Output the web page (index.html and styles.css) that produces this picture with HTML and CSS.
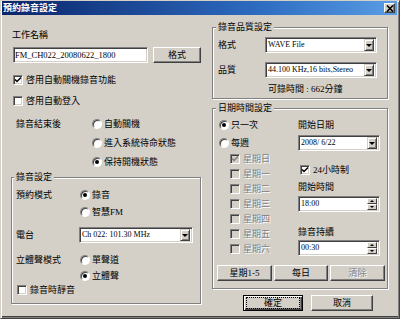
FILE: index.html
```html
<!DOCTYPE html>
<html lang="zh-Hant">
<head>
    <meta charset="UTF-8">
    <title>預約錄音設定</title>
    <link rel="stylesheet" href="styles.css">
</head>
<body>
    <div class="window">
        <div class="titlebar">
            <span class="title">預約錄音設定</span>
            <span class="close-btn">
                <svg width="8" height="7" viewBox="0 0 8 7"><path d="M1 0.5 L7 6.5 M7 0.5 L1 6.5" stroke="#000" stroke-width="1.6"/></svg>
            </span>
        </div>
        <div class="dialog">
            <div class="col-left">
                <div class="name-label">工作名稱</div>
                <div class="name-row">
                    <div class="textbox name-box">FM_CH022_20080622_1800</div>
                    <div class="button format-btn">格式</div>
                </div>
                <div class="check cb-autooff">
                    <span class="box"><svg width="8" height="8" viewBox="0 0 8 8"><path d="M1 3.5 L3 5.5 L7 1.5" fill="none" stroke="#000" stroke-width="1.5"/></svg></span>
                    <span>啓用自動關機錄音功能</span>
                </div>
                <div class="check cb-autologin">
                    <span class="box"></span>
                    <span>啓用自動登入</span>
                </div>
                <div class="end-row">
                    <div class="end-label">錄音結束後</div>
                    <div class="radio-list end-list">
                        <div class="radio"><span class="dot"></span>自動關機</div>
                        <div class="radio"><span class="dot"></span>進入系統待命狀態</div>
                        <div class="radio"><span class="dot on"></span>保持開機狀態</div>
                    </div>
                </div>
                <fieldset class="group rec-group">
                    <legend>錄音設定</legend>
                    <div class="mode-row">
                        <div class="row-label">預約模式</div>
                        <div class="radio-list mode-list">
                            <div class="radio"><span class="dot on"></span>錄音</div>
                            <div class="radio"><span class="dot"></span>智慧FM</div>
                        </div>
                    </div>
                    <div class="station-row">
                        <div class="row-label station-label">電台</div>
                        <div class="textbox combo station-combo"><span class="combo-text">Ch 022: 101.30 MHz</span><span class="drop"></span></div>
                    </div>
                    <div class="stereo-row">
                        <div class="row-label">立體聲模式</div>
                        <div class="radio-list stereo-list">
                            <div class="radio"><span class="dot"></span>單聲道</div>
                            <div class="radio"><span class="dot on"></span>立體聲</div>
                        </div>
                    </div>
                    <div class="check cb-mute">
                        <span class="box"></span>
                        <span>錄音時靜音</span>
                    </div>
                </fieldset>
            </div>

            <div class="col-right">
                <fieldset class="group quality-group">
                    <legend>錄音品質設定</legend>
                    <div class="q-row">
                        <div class="q-label">格式</div>
                        <div class="textbox combo q-combo"><span class="combo-text">WAVE File</span><span class="drop"></span></div>
                    </div>
                    <div class="q-row q-row2">
                        <div class="q-label">品質</div>
                        <div class="textbox combo q-combo"><span class="combo-text">44.100 KHz,16 bits,Stereo</span><span class="drop"></span></div>
                    </div>
                    <div class="capacity">可錄時間 : 662分鐘</div>
                </fieldset>

                <fieldset class="group sched-group">
                    <legend>日期時間設定</legend>
                    <div class="sched-cols">
                        <div class="sched-left">
                            <div class="radio"><span class="dot on"></span>只一次</div>
                            <div class="radio weekly"><span class="dot"></span>每週</div>
                            <div class="days">
                                <div class="check disabled">
                                    <span class="box"><svg width="8" height="8" viewBox="0 0 8 8"><path d="M1 3.5 L3 5.5 L7 1.5" fill="none" stroke="#808080" stroke-width="1.5"/></svg></span>
                                    <span>星期日</span>
                                </div>
                                <div class="check disabled"><span class="box"></span><span>星期一</span></div>
                                <div class="check disabled"><span class="box"></span><span>星期二</span></div>
                                <div class="check disabled"><span class="box"></span><span>星期三</span></div>
                                <div class="check disabled"><span class="box"></span><span>星期四</span></div>
                                <div class="check disabled"><span class="box"></span><span>星期五</span></div>
                                <div class="check disabled"><span class="box"></span><span>星期六</span></div>
                            </div>
                        </div>
                        <div class="sched-right">
                            <div class="s-label">開始日期</div>
                            <div class="textbox combo s-field"><span class="combo-text">2008/ 6/22</span><span class="drop"></span></div>
                            <div class="check cb-24h">
                                <span class="box"><svg width="8" height="8" viewBox="0 0 8 8"><path d="M1 3.5 L3 5.5 L7 1.5" fill="none" stroke="#000" stroke-width="1.5"/></svg></span>
                                <span>24小時制</span>
                            </div>
                            <div class="s-label start-label">開始時間</div>
                            <div class="textbox combo s-field"><span class="combo-text">18:00</span><span class="spin"><span class="up"></span><span class="down"></span></span></div>
                            <div class="s-label dur-label">錄音持續</div>
                            <div class="textbox combo s-field dur-field"><span class="combo-text">00:30</span><span class="spin"><span class="up"></span><span class="down"></span></span></div>
                        </div>
                    </div>
                    <div class="day-buttons">
                        <div class="button wd-btn">星期1-5</div>
                        <div class="button daily-btn">每日</div>
                        <div class="button wd-btn disabled-text">清除</div>
                    </div>
                </fieldset>

                <div class="actions">
                    <div class="button default-btn ok-btn"><span class="focus">確定</span></div>
                    <div class="button cancel-btn">取消</div>
                </div>
            </div>
        </div>
    </div>
</body>
</html>
```

FILE: styles.css
```css
* {
    box-sizing: border-box;
}

body {
    margin: 0;
    font-family: "Liberation Serif", "Noto Sans CJK TC", serif;
    font-size: 9px;
    line-height: 12px;
    color: #000;
    background: #d4d0c8;
}

.window {
    width: 400px;
    height: 319px;
    background: #d4d0c8;
    border: 1px solid;
    border-color: #d4d0c8 #404040 #404040 #d4d0c8;
    box-shadow: inset 1px 1px #fff, inset -1px -1px #808080, inset 0 -2px #404040;
    padding: 0 2px 0 1px;
}

/* title bar */
.titlebar {
    height: 14px;
    display: flex;
    align-items: center;
    justify-content: space-between;
    padding: 0 2px 0 1px;
    background: linear-gradient(90deg, #0a246a, #2d6cc0 65%, #5a9ce6);
    color: #fff;
    font-weight: bold;
}

.close-btn {
    width: 11px;
    height: 10px;
    display: flex;
    align-items: center;
    justify-content: center;
    background: #d4d0c8;
    border: 1px solid;
    border-color: #fff #404040 #404040 #fff;
    box-shadow: inset -1px -1px #808080;
}

.dialog {
    display: flex;
    gap: 11px;
    padding: 6px 0 0 9px;
}

.col-left {
    width: 190px;
}

.col-right {
    width: 176px;
}

/* common controls */
.textbox {
    height: 16px;
    background: #fff;
    border: 1px solid;
    border-color: #808080 #fff #fff #808080;
    box-shadow: inset 1px 1px #404040, inset -1px -1px #d4d0c8;
    line-height: 14px;
    padding: 0 2px;
    white-space: nowrap;
    overflow: hidden;
}

.button {
    height: 16px;
    display: flex;
    align-items: center;
    justify-content: center;
    background: #d4d0c8;
    border: 1px solid;
    border-color: #fff #404040 #404040 #fff;
    box-shadow: inset -1px -1px #808080;
}

.default-btn {
    border-color: #000;
    box-shadow: inset 1px 1px #fff, inset -1px -1px #404040, inset -2px -2px #808080;
}

.default-btn .focus {
    display: flex;
    align-items: center;
    justify-content: center;
    width: calc(100% - 6px);
    height: 10px;
    outline: 1px dotted #000;
}

.disabled-text,
.disabled {
    color: #808080;
    text-shadow: 1px 1px #fff;
}

.combo {
    display: flex;
    align-items: center;
    padding: 0 2px 0 2px;
}

.combo-text {
    flex: 1;
    overflow: hidden;
    font-size: 8px;
}

.name-box {
    font-size: 8.5px;
}

.drop {
    width: 10px;
    height: 12px;
    display: flex;
    align-items: center;
    justify-content: center;
    background: #d4d0c8;
    border: 1px solid;
    border-color: #d4d0c8 #404040 #404040 #d4d0c8;
    box-shadow: inset 1px 1px #fff, inset -1px -1px #808080;
}

.drop::after {
    content: '';
    border-left: 3px solid transparent;
    border-right: 3px solid transparent;
    border-top: 3px solid #000;
}

.spin {
    width: 10px;
    height: 12px;
    display: flex;
    flex-direction: column;
}

.spin .up,
.spin .down {
    flex: 1;
    display: flex;
    align-items: center;
    justify-content: center;
    background: #d4d0c8;
    border: 1px solid;
    border-color: #fff #404040 #404040 #fff;
}

.spin .up::after {
    content: '';
    border-left: 2px solid transparent;
    border-right: 2px solid transparent;
    border-bottom: 2px solid #000;
}

.spin .down::after {
    content: '';
    border-left: 2px solid transparent;
    border-right: 2px solid transparent;
    border-top: 2px solid #000;
}

.check {
    display: flex;
    align-items: center;
    gap: 3px;
    height: 12px;
    white-space: nowrap;
}

.box {
    width: 10px;
    height: 10px;
    display: flex;
    align-items: center;
    justify-content: center;
    background: #fff;
    border: 1px solid;
    border-color: #808080 #fff #fff #808080;
    box-shadow: inset 1px 1px #404040, inset -1px -1px #d4d0c8;
}

.disabled .box {
    background: #d4d0c8;
}

.radio {
    display: flex;
    align-items: center;
    gap: 2px;
    height: 12px;
    white-space: nowrap;
}

.dot {
    width: 10px;
    height: 10px;
    display: flex;
    align-items: center;
    justify-content: center;
    border-radius: 50%;
    background: #fff;
    border: 1px solid;
    border-color: #808080 #fff #fff #808080;
    box-shadow: inset 1px 1px #404040;
}

.dot.on::after {
    content: '';
    width: 4px;
    height: 4px;
    border-radius: 50%;
    background: #000;
}

.radio-list {
    display: flex;
    flex-direction: column;
}

.group {
    margin: 0;
    min-width: 0;
    border: 1px solid #808080;
    box-shadow: inset 1px 1px #fff, 1px 1px #fff;
}

.group legend {
    padding: 0 2px;
    margin-left: -2px;
    height: 12px;
    line-height: 12px;
    background: #d4d0c8;
}

/* left column */
.name-label {
    margin-top: 8px;
    padding-left: 1px;
}

.name-row {
    display: flex;
    gap: 5px;
    margin-top: 6px;
    padding-left: 2px;
}

.name-box {
    width: 135px;
    padding-left: 1px;
}

.format-btn {
    width: 48px;
}

.cb-autooff {
    margin-top: 11px;
    padding-left: 2px;
}

.cb-autologin {
    margin-top: 9px;
    padding-left: 2px;
}

.end-row {
    display: flex;
    margin-top: 11px;
    padding-left: 5px;
}

.end-label {
    width: 76px;
}

.end-list {
    gap: 7px;
}

.rec-group {
    margin-top: 3px;
    padding: 6px 0 7px 4px;
}

.mode-row,
.stereo-row {
    display: flex;
}

.row-label {
    width: 64px;
}

.mode-list {
    gap: 5px;
}

.station-row {
    display: flex;
    align-items: center;
    margin-top: 9px;
}

.station-label {
    width: 63px;
}

.station-combo {
    width: 114px;
}

.stereo-row {
    margin-top: 11px;
}

.stereo-list {
    gap: 4px;
}

.cb-mute {
    margin-top: 2px;
    padding-left: 1px;
}

/* right column */
.quality-group {
    padding: 4px 0 3px 5px;
}

.q-row {
    display: flex;
    align-items: center;
}

.q-row2 {
    margin-top: 9px;
}

.q-label {
    width: 47px;
}

.q-combo {
    width: 112px;
}

.capacity {
    margin-top: 5px;
    padding-left: 50px;
}

.sched-group {
    margin-top: 3px;
    padding: 5px 0 7px 5px;
}

.sched-cols {
    display: flex;
}

.sched-left {
    width: 80px;
    padding-left: 1px;
}

.weekly {
    margin-top: 6px;
}

.days {
    display: flex;
    flex-direction: column;
    gap: 3px;
    margin-top: 4px;
    padding-left: 11px;
}

.sched-right {
    width: 82px;
}

.s-field {
    width: 82px;
    margin-top: 4px;
}

.cb-24h {
    margin-top: 13px;
    padding-left: 2px;
}

.start-label {
    margin-top: 5px;
}

.start-label + .s-field {
    margin-top: 3px;
}

.dur-label {
    margin-top: 14px;
}

.dur-field {
    margin-top: 2px;
}

.day-buttons {
    display: flex;
    gap: 2px;
    margin-top: 9px;
    margin-left: -1px;
}

.wd-btn {
    width: 55px;
}

.daily-btn {
    width: 54px;
}

.actions {
    display: flex;
    gap: 8px;
    margin-top: 6px;
    margin-left: 31px;
}

.ok-btn {
    width: 60px;
}

.cancel-btn {
    width: 62px;
}
```
